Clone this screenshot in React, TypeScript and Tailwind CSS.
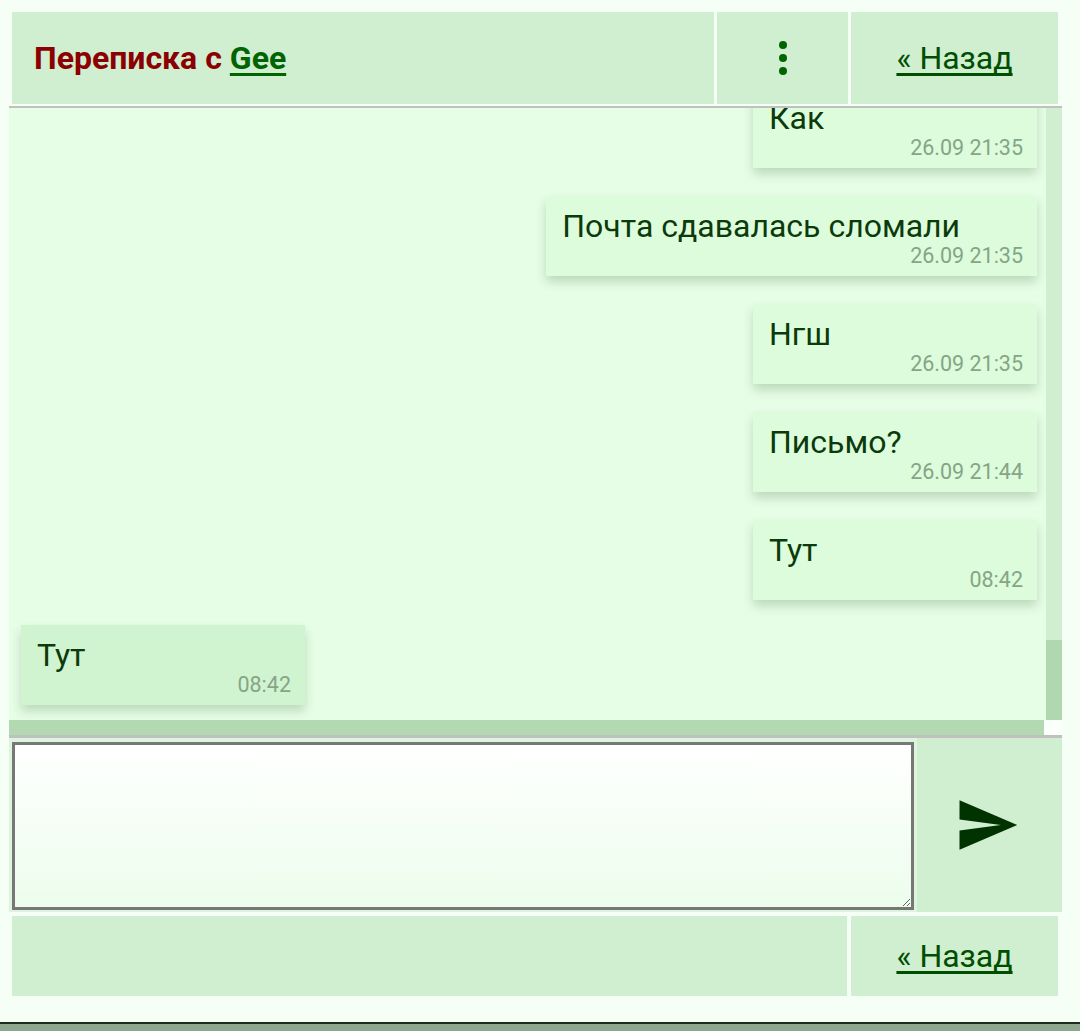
import React from "react";

type BubbleProps = { text: string; time: string; left?: boolean; extra?: string; wide?: boolean };

function Bubble({ text, time, left, extra, wide }: BubbleProps) {
  return (
    <div
      className={
        "min-w-[284px] pl-4 pr-[14px] pt-[12px] pb-[8px] shadow-[0_6px_10px_rgba(0,50,0,0.18)] " +
        (left ? "self-start bg-[#d0f3d0] " : "self-end bg-[#dcfcdc] ") +
        (extra ?? "")
      }
    >
      <div className={"text-[32px] leading-[36px] text-[#0b3a0b] " + (wide ? "pr-[63px]" : "")}>{text}</div>
      <div className="text-right text-[21.5px] leading-[24px] text-[#85a585]">{time}</div>
    </div>
  );
}

export default function App() {
  return (
    <div className="w-[1080px] h-[1031px] bg-[#f5fff5] flex flex-col font-['Roboto',sans-serif]">
      <div className="flex-1 flex flex-col pl-[9px] pr-[18px] pt-[12px]">
        {/* Header */}
        <div className="flex h-[92px] gap-[3px] pl-[3px] pr-[4px]">
          <div className="flex-1 bg-[#d0eed0] flex items-center pl-[22px]">
            <span className="text-[32px] font-bold text-[#8b0000]">
              Переписка с{" "}
              <a className="text-[#006400] underline decoration-[3px] underline-offset-[4px] [text-decoration-skip-ink:none]">Gee</a>
            </span>
          </div>
          <div className="w-[131px] bg-[#d0eed0] flex flex-col items-center justify-center gap-[5px]">
            <span className="w-[8px] h-[8px] rounded-full bg-[#006400]" />
            <span className="w-[8px] h-[8px] rounded-full bg-[#006400]" />
            <span className="w-[8px] h-[8px] rounded-full bg-[#006400]" />
          </div>
          <div className="w-[207px] bg-[#d0eed0] flex items-center justify-center">
            <a className="text-[32px] text-[#004f00] underline underline-offset-[4px] [text-decoration-skip-ink:none]">« Назад</a>
          </div>
        </div>
        <div className="h-[2px] mt-[2px] bg-[#c0c0c0]" />

        {/* Chat */}
        <div className="flex h-[612px]">
          <div className="flex-1 bg-[#e6fee6] overflow-hidden">
            <div className="flex flex-col gap-[28px] pl-[12px] pr-[9px] -mt-[20px]">
              <Bubble text="Как" time="26.09 21:35" />
              <Bubble text="Почта сдавалась сломали" time="26.09 21:35" wide />
              <Bubble text="Нгш" time="26.09 21:35" />
              <Bubble text="Письмо?" time="26.09 21:44" />
              <Bubble text="Тут" time="08:42" />
              <Bubble text="Тут" time="08:42" left extra="-mt-[3px]" />
            </div>
          </div>
          <div className="w-[16px] flex flex-col">
            <div className="flex-1 bg-[#d0eed0]" />
            <div className="h-[80px] bg-[#b0d8b0]" />
          </div>
        </div>
        <div className="flex h-[15px]">
          <div className="flex-1 bg-[#b2d9b2]" />
          <div className="w-[18px] bg-[#fafffa]" />
        </div>
        <div className="h-[3px] bg-[#c0c0c0]" />

        {/* Input */}
        <div className="flex h-[174px] bg-[#ddf4dd]">
          <div className="pl-[3px] pt-[4px]">
            <textarea className="block w-[902px] h-[168px] border-[3px] border-[#787778] bg-gradient-to-b from-white to-[#ecfdec] outline-none" />
          </div>
          <div className="flex-1 ml-[3px] bg-[#d0eed0] flex items-center justify-center">
            <svg width="66" height="66" viewBox="0 0 24 24" className="-ml-[6px]">
              <path d="M2.01 21L23 12 2.01 3 2 10l15 2-15 2z" fill="#003300" />
            </svg>
          </div>
        </div>

        {/* Footer */}
        <div className="mt-[4px] h-[80px] flex gap-[4px] pl-[3px] pr-[4px]">
          <div className="flex-1 bg-[#d0eed0]" />
          <div className="w-[207px] bg-[#d0eed0] flex items-center justify-center">
            <a className="text-[32px] text-[#004f00] underline underline-offset-[4px] [text-decoration-skip-ink:none]">« Назад</a>
          </div>
        </div>
      </div>
      <div className="h-[9px] border-t-2 border-[#1b2e1b] bg-[#8ea88e]" />
    </div>
  );
}
